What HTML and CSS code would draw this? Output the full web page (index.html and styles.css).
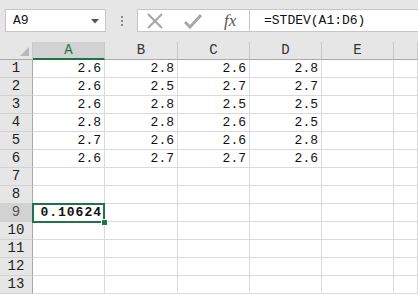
FILE: index.html
```
<!DOCTYPE html>
<html lang="zh-CN">
<head>
    <meta charset="UTF-8">
    <title>STDEV</title>
    <link rel="stylesheet" href="styles.css">
</head>
<body>
    <div class="toolbar">
        <div class="name-box">
            <span>A9</span>
            <svg class="dropdown" width="8" height="5" viewBox="0 0 8 5"><path d="M0 0H8L4 4.5Z" fill="#555"/></svg>
        </div>
        <div class="dots"><i></i><i></i><i></i></div>
        <div class="formula-tools">
            <svg width="18" height="16" viewBox="0 0 18 16"><path d="M2 1L16 15M16 1L2 15" stroke="#a8a8a8" stroke-width="2.2" fill="none"/></svg>
            <svg width="18" height="16" viewBox="0 0 18 16"><path d="M1 9L6 14L17 2" stroke="#a8a8a8" stroke-width="3" fill="none"/></svg>
            <span class="fx">fx</span>
        </div>
        <div class="formula">=STDEV(A1:D6)</div>
    </div>

    <div class="sheet" id="sheet"></div>

    <script>
        // values of A1:D6
        var data = [
            ['2.6', '2.8', '2.6', '2.8'],
            ['2.6', '2.5', '2.7', '2.7'],
            ['2.6', '2.8', '2.5', '2.5'],
            ['2.8', '2.8', '2.6', '2.5'],
            ['2.7', '2.6', '2.6', '2.8'],
            ['2.6', '2.7', '2.7', '2.6']
        ];
        var cols = ['A', 'B', 'C', 'D', 'E', ''];
        var sheet = document.getElementById('sheet');
        var html = '<div class="corner"><span class="tri"></span></div>';

        cols.forEach(function(c, i) {
            html += '<div class="col-head' + (i === 0 ? ' sel' : '') + '">' + c + '</div>';
        });

        for (var r = 1; r <= 13; r++) {
            html += '<div class="row-head' + (r === 9 ? ' sel' : '') + '">' + r + '</div>';
            for (var c = 0; c < cols.length; c++) {
                var val = '';
                var cls = 'cell';
                if (r <= 6 && c < 4) val = data[r - 1][c];
                if (r === 9 && c === 0) {
                    val = '0.10624';
                    cls += ' active';
                }
                html += '<div class="' + cls + '">' + val + '</div>';
            }
        }
        sheet.innerHTML = html;
    </script>
</body>
</html>
```

FILE: styles.css
```
body {
    margin: 0;
    width: 418px;
    height: 295px;
    overflow: hidden;
    background-color: #fff;
    font-family: "Liberation Mono", "DejaVu Sans Mono", monospace;
    font-size: 13px;
    color: #111;
}

.toolbar {
    height: 42px;
    box-sizing: border-box;
    padding: 9px 0 0 5px;
    background-color: #e6e6e6;
    display: flex;
    align-items: flex-start;
}

.name-box {
    width: 101px;
    height: 23px;
    box-sizing: border-box;
    border: 1px solid #c6c6c6;
    background-color: #fff;
    display: flex;
    align-items: center;
    justify-content: space-between;
    padding: 0 6px 0 7px;
}

.dropdown {
    margin-top: 1px;
}

.dots {
    width: 31px;
    height: 23px;
    display: flex;
    flex-direction: column;
    align-items: center;
    justify-content: center;
    gap: 2px;
}

.dots i {
    width: 2px;
    height: 2px;
    background-color: #8a8a8a;
}

.formula-tools {
    width: 112px;
    height: 23px;
    box-sizing: border-box;
    border: 1px solid #c6c6c6;
    border-right: none;
    background-color: #fff;
    display: flex;
    align-items: center;
    padding-left: 8px;
    gap: 20px;
}

.formula-tools .fx {
    font-family: "Liberation Serif", serif;
    font-style: italic;
    font-size: 17px;
    color: #555;
    margin-left: 2px;
}

.formula {
    flex: 1;
    height: 23px;
    box-sizing: border-box;
    border: 1px solid #c6c6c6;
    border-right: none;
    background-color: #fff;
    padding-left: 14px;
    line-height: 21px;
    color: #111;
}

.sheet {
    display: grid;
    grid-template-columns: 33px 72px 73px 72px 72px 72px 1fr;
    grid-auto-rows: 18px;
}

.sheet > div {
    box-sizing: border-box;
    border-right: 1px solid #dadada;
    border-bottom: 1px solid #dadada;
    line-height: 17px;
}

.corner {
    background-color: #e6e6e6;
    position: relative;
    border-bottom: 1px solid #a8a8a8 !important;
    border-right: 1px solid #c8c8c8 !important;
}

.corner .tri {
    position: absolute;
    right: 3px;
    bottom: 3px;
    width: 0;
    height: 0;
    border-left: 9px solid transparent;
    border-bottom: 9px solid #b8b8b8;
}

.col-head {
    background-color: #e6e6e6;
    text-align: center;
    color: #333;
    font-size: 14px;
    border-right: 1px solid #c8c8c8 !important;
    border-bottom: 1px solid #a8a8a8 !important;
}

.col-head.sel {
    background-color: #d2d2d2;
    color: #217346;
    border-bottom: 2px solid #217346 !important;
}

.row-head {
    background-color: #e6e6e6;
    text-align: center;
    color: #222;
    font-size: 14px;
    border-right: 1px solid #a8a8a8 !important;
    border-bottom: 1px solid #d2d2d2 !important;
}

.row-head.sel {
    background-color: #d2d2d2;
    color: #555;
}

.cell {
    text-align: right;
    padding-right: 3px;
}

.cell.active {
    position: relative;
    border: 2px solid #217346 !important;
    margin: -1px 0 0 -1px;
    height: 20px;
    font-weight: bold;
    letter-spacing: 1px;
    line-height: 16px;
    padding-right: 1px;
}

.cell.active::after {
    content: "";
    position: absolute;
    right: -5px;
    bottom: -5px;
    width: 5px;
    height: 5px;
    background-color: #217346;
    border: 1px solid #fff;
}
```
